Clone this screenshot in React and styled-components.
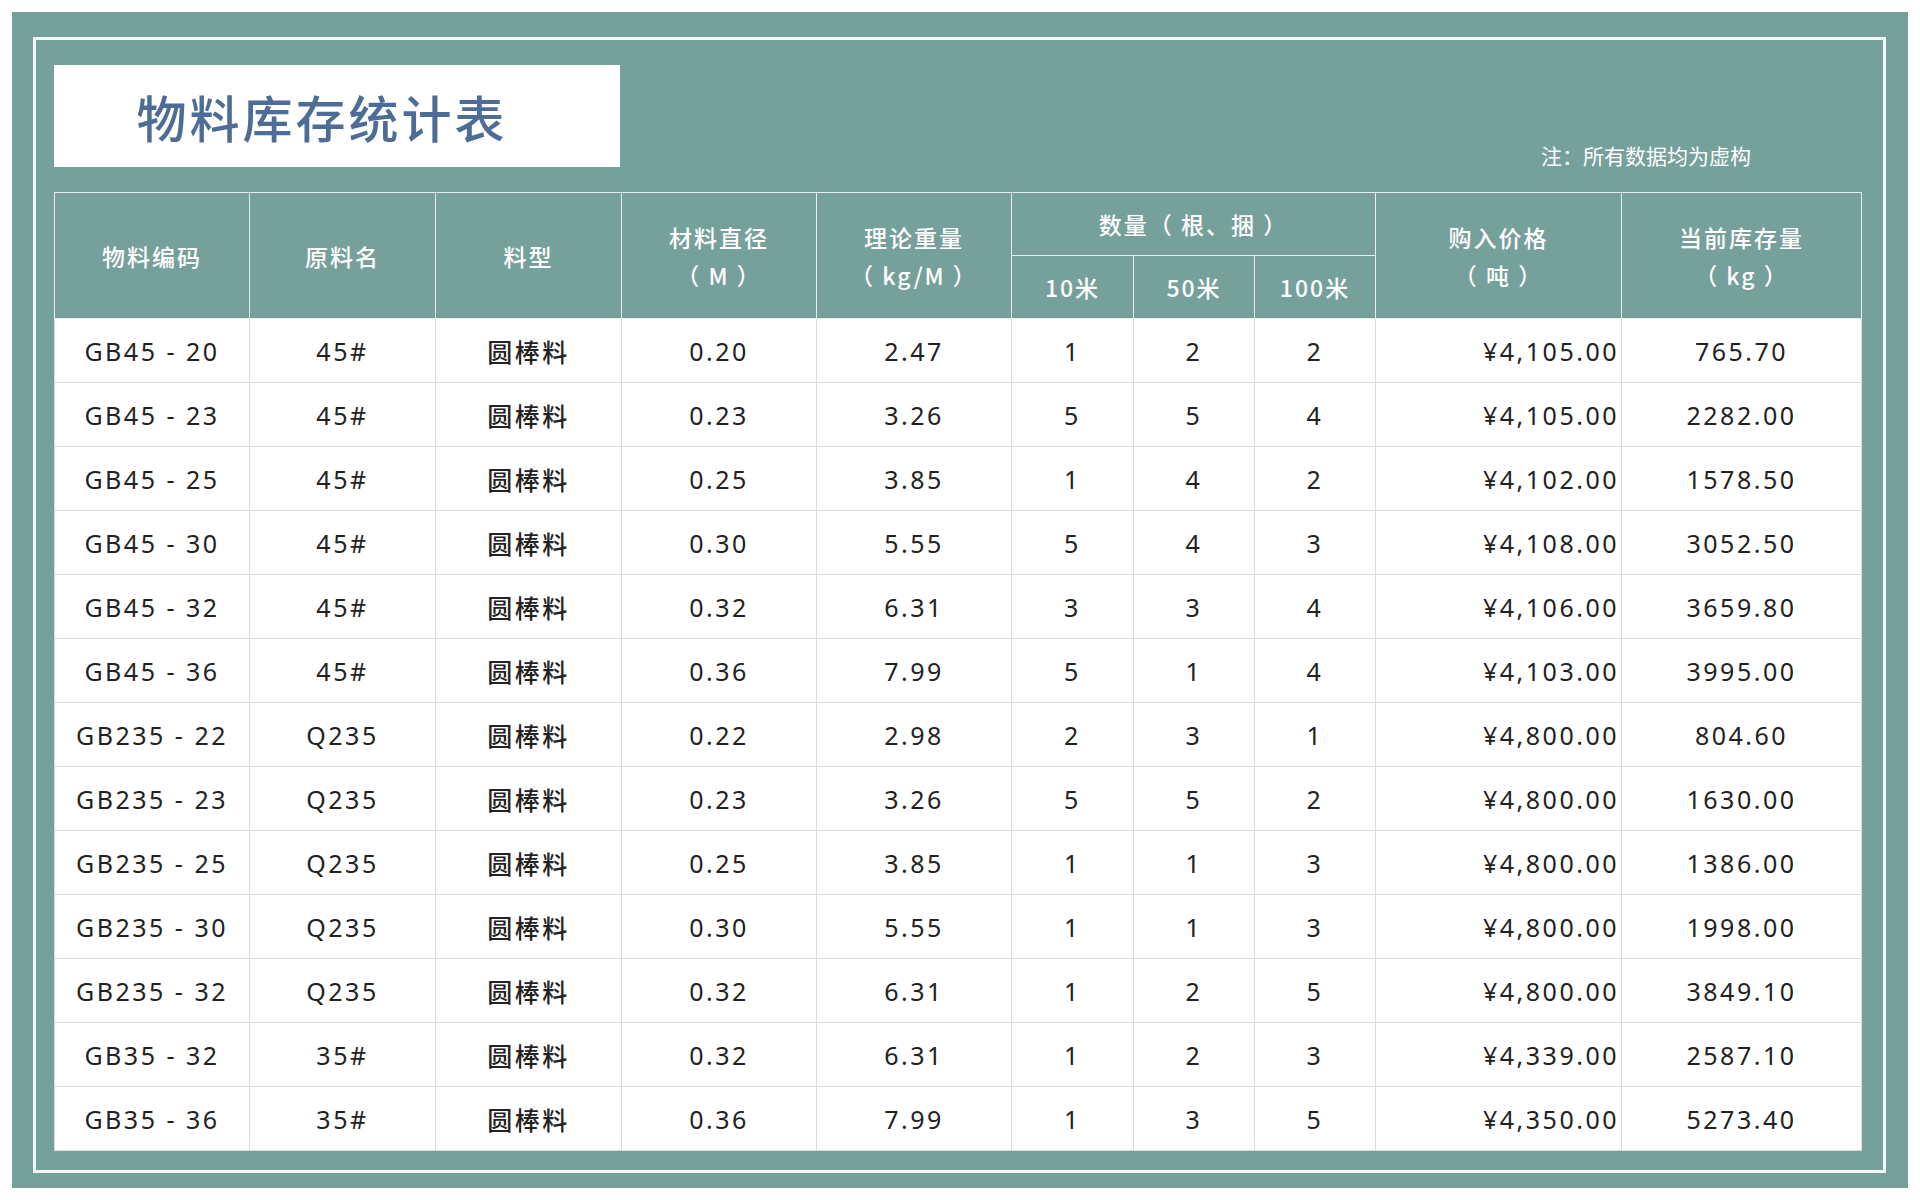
import React from "react";
import styled, { createGlobalStyle } from "styled-components";

const G = createGlobalStyle`
  html,body{margin:0;padding:0;background:#fff;}
  body{font-family:"Noto Sans CJK SC","Noto Sans",sans-serif;}
`;
const TEAL = "#76a19b";
const Outer = styled.div`
  margin:12px; width:1896px; height:1176px; box-sizing:border-box;
  background:${TEAL}; padding:25px 22px 15px 21px;
`;
const Frame = styled.div`
  height:100%; box-sizing:border-box; border:3px solid #f4f7f6;
  padding:25px 22px 15px 18px; display:flex; flex-direction:column;
`;
const Top = styled.div`display:flex; justify-content:space-between; align-items:flex-end; height:127px;`;
const TitleBox = styled.div`
  width:566px; height:102px; background:#fff; align-self:flex-start;
  display:flex; align-items:center; justify-content:center; box-sizing:border-box; padding-right:30px;
  font-size:50px; color:#4d6d96; letter-spacing:3px; font-weight:500;
`;
const Note = styled.div`color:#fff; font-size:21px; padding:0 110px 22px 0;`;
const Table = styled.table`
  border-collapse:collapse; width:1807px; table-layout:fixed;
  font-family:"Noto Sans","Noto Sans CJK SC",sans-serif;
`;
const Th = styled.th`
  background:${TEAL}; color:#fff; font-weight:500; font-size:23px; line-height:38px;
  border:1.5px solid #e7efed; letter-spacing:2px; padding:0;
  height:${p=>p.$h||62}px;
  font-family:"Noto Sans CJK SC",sans-serif;
`;
const Td = styled.td`
  background:#fff; color:#222; font-size:25px; height:63px; padding:0;
  border:1.5px solid #dcdcdc; letter-spacing:2.5px;
  text-align:${p=>p.$right?"right":"center"}; padding-right:${p=>p.$right?"2px":"0"};
  font-family:${p=>p.$cjk?'"Noto Sans CJK SC",sans-serif':'"Noto Sans","Noto Sans CJK SC",sans-serif'};
  font-weight:${p=>p.$cjk?500:400};
`;

const rows = [
  ["GB45-20","45#","0.20","2.47",1,2,2,"4,105.00","765.70"],
  ["GB45-23","45#","0.23","3.26",5,5,4,"4,105.00","2282.00"],
  ["GB45-25","45#","0.25","3.85",1,4,2,"4,102.00","1578.50"],
  ["GB45-30","45#","0.30","5.55",5,4,3,"4,108.00","3052.50"],
  ["GB45-32","45#","0.32","6.31",3,3,4,"4,106.00","3659.80"],
  ["GB45-36","45#","0.36","7.99",5,1,4,"4,103.00","3995.00"],
  ["GB235-22","Q235","0.22","2.98",2,3,1,"4,800.00","804.60"],
  ["GB235-23","Q235","0.23","3.26",5,5,2,"4,800.00","1630.00"],
  ["GB235-25","Q235","0.25","3.85",1,1,3,"4,800.00","1386.00"],
  ["GB235-30","Q235","0.30","5.55",1,1,3,"4,800.00","1998.00"],
  ["GB235-32","Q235","0.32","6.31",1,2,5,"4,800.00","3849.10"],
  ["GB35-32","35#","0.32","6.31",1,2,3,"4,339.00","2587.10"],
  ["GB35-36","35#","0.36","7.99",1,3,5,"4,350.00","5273.40"],
];
const widths=[195,186,186,195,195,122,121,121,246,240];

export default function App(){
  return (<>
    <G/>
    <Outer><Frame>
      <Top>
        <TitleBox>物料库存统计表</TitleBox>
        <Note>注：所有数据均为虚构</Note>
      </Top>
      <Table>
        <colgroup>{widths.map((w,i)=><col key={i} style={{width:w}}/>)}</colgroup>
        <thead>
          <tr>
            <Th rowSpan={2}>物料编码</Th>
            <Th rowSpan={2}>原料名</Th>
            <Th rowSpan={2}>料型</Th>
            <Th rowSpan={2}>材料直径<br/>（ M ）</Th>
            <Th rowSpan={2}>理论重量<br/>（ kg/M ）</Th>
            <Th colSpan={3}>数量（ 根、捆 ）</Th>
            <Th rowSpan={2}>购入价格<br/>（ 吨 ）</Th>
            <Th rowSpan={2}>当前库存量<br/>（ kg ）</Th>
          </tr>
          <tr><Th>10米</Th><Th>50米</Th><Th>100米</Th></tr>
        </thead>
        <tbody>
          {rows.map(r=>(
            <tr key={r[0]}>
              <Td>{r[0].replace("-"," - ")}</Td>
              <Td>{r[1]}</Td>
              <Td $cjk>圆棒料</Td>
              <Td>{r[2]}</Td>
              <Td>{r[3]}</Td>
              <Td>{r[4]}</Td>
              <Td>{r[5]}</Td>
              <Td>{r[6]}</Td>
              <Td $right>¥{r[7]}</Td>
              <Td>{r[8]}</Td>
            </tr>
          ))}
        </tbody>
      </Table>
    </Frame></Outer>
  </>);
}
